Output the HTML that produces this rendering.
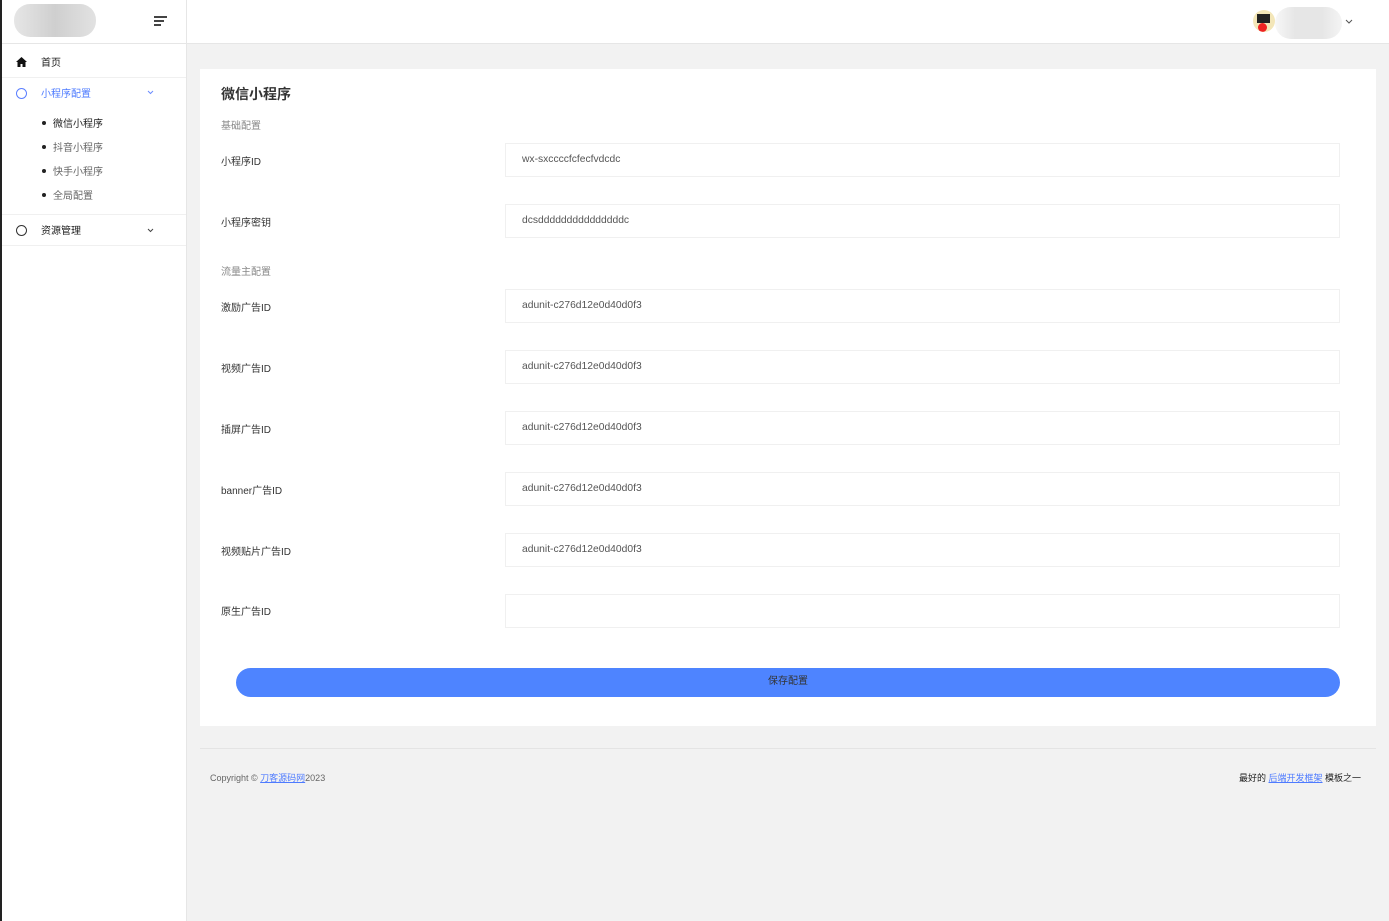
<!DOCTYPE html>
<html><head><meta charset="utf-8"><style>
*{box-sizing:border-box;margin:0;padding:0}
body{width:1389px;height:921px;background:#f2f2f2;font-family:"Liberation Sans","Noto Sans CJK SC",sans-serif;font-size:10px;color:#333;position:relative;overflow:hidden}
.abs{position:absolute}
.side{left:0;top:0;width:187px;height:921px;background:#fff;border-right:1px solid #e6e6e6;border-left:2px solid #222}
.head{left:187px;top:0;width:1202px;height:44px;background:#fff;border-bottom:1px solid #e6e6e6}
.card{left:200px;top:69px;width:1176px;height:657px;background:#fff}
.lbl{left:221px;font-size:10px;color:#333}
.inp{left:505px;width:835px;height:34px;border:1px solid #f0f0f0;background:#fff;padding-left:16px;line-height:32px;font-size:10.3px;color:#555}
.sub{left:221px;color:#888;font-size:10px}
.li{left:53px;font-size:10px;color:#666}
.li:before{content:"";position:absolute;left:-11px;top:6px;width:4px;height:4px;border-radius:50%;background:#222}
</style></head><body>
<div class="abs side"></div>
<div class="abs" style="left:14px;top:4px;width:82px;height:33px;border-radius:16px;background:linear-gradient(90deg,#e6e6e6,#cfcfcf 50%,#e2e2e2)"></div>
<div class="abs" style="left:154px;top:16px;width:13px;height:1.5px;background:#444"></div>
<div class="abs" style="left:154px;top:20px;width:10px;height:1.5px;background:#444"></div>
<div class="abs" style="left:154px;top:24px;width:7px;height:1.5px;background:#444"></div>
<div class="abs" style="left:2px;top:43px;width:184px;height:1px;background:#e6e6e6"></div>
<svg class="abs" style="left:16px;top:57px" width="11" height="10" viewBox="0 0 11 10"><path d="M5.5 0L0 5h1.5v5h3V7h2v3h3V5H11z" fill="#111"/></svg>
<div class="abs" style="left:41px;top:54px;color:#222">首页</div>
<div class="abs" style="left:2px;top:77px;width:184px;height:1px;background:#f0f0f0"></div>
<div class="abs" style="left:16px;top:88px;width:11px;height:11px;border:1.3px solid #5b7fff;border-radius:50%"></div>
<div class="abs" style="left:41px;top:85px;color:#4e7bff">小程序配置</div>
<svg class="abs" style="left:147px;top:90px" width="7" height="5"><path d="M1 1l2.5 2.5L6 1" stroke="#6b8cff" fill="none"/></svg>
<div class="abs li" style="top:115px;color:#222">微信小程序</div>
<div class="abs li" style="top:139px">抖音小程序</div>
<div class="abs li" style="top:163px">快手小程序</div>
<div class="abs li" style="top:187px">全局配置</div>
<div class="abs" style="left:2px;top:214px;width:184px;height:1px;background:#f0f0f0"></div>
<div class="abs" style="left:16px;top:225px;width:11px;height:11px;border:1.3px solid #333;border-radius:50%"></div>
<div class="abs" style="left:41px;top:222px;color:#222">资源管理</div>
<svg class="abs" style="left:147px;top:228px" width="7" height="5"><path d="M1 1l2.5 2.5L6 1" stroke="#444" fill="none"/></svg>
<div class="abs" style="left:2px;top:245px;width:184px;height:1px;background:#f0f0f0"></div>
<div class="abs head"></div>
<div class="abs" style="left:1253px;top:10px;width:22px;height:22px;border-radius:50%;background:#f3e6b8;overflow:hidden"><div style="position:absolute;left:4px;top:4px;width:13px;height:9px;background:#222"></div><div style="position:absolute;left:5px;top:13px;width:9px;height:9px;border-radius:50%;background:#e22"></div></div>
<div class="abs" style="left:1275px;top:7px;width:67px;height:32px;border-radius:16px;background:linear-gradient(90deg,#f7f7f7,#e6e6e6 30%,#e6e6e6 70%,#f4f4f4)"></div>
<svg class="abs" style="left:1345px;top:19px" width="8" height="5"><path d="M1 1l3 3 3-3" stroke="#555" fill="none"/></svg>
<div class="abs card"></div>
<div class="abs" style="left:221px;top:84px;font-size:14px;font-weight:bold;color:#333">微信小程序</div>
<div class="abs sub" style="top:117px">基础配置</div>
<div class="abs lbl" style="top:153px">小程序ID</div><div class="abs inp" style="top:143px">wx-sxccccfcfecfvdcdc</div>
<div class="abs lbl" style="top:214px">小程序密钥</div><div class="abs inp" style="top:204px">dcsdddddddddddddddc</div>
<div class="abs sub" style="top:263px">流量主配置</div>
<div class="abs lbl" style="top:299px">激励广告ID</div><div class="abs inp" style="top:289px">adunit-c276d12e0d40d0f3</div>
<div class="abs lbl" style="top:360px">视频广告ID</div><div class="abs inp" style="top:350px">adunit-c276d12e0d40d0f3</div>
<div class="abs lbl" style="top:421px">插屏广告ID</div><div class="abs inp" style="top:411px">adunit-c276d12e0d40d0f3</div>
<div class="abs lbl" style="top:482px">banner广告ID</div><div class="abs inp" style="top:472px">adunit-c276d12e0d40d0f3</div>
<div class="abs lbl" style="top:543px">视频贴片广告ID</div><div class="abs inp" style="top:533px">adunit-c276d12e0d40d0f3</div>
<div class="abs lbl" style="top:603px">原生广告ID</div><div class="abs inp" style="top:594px"></div>
<div class="abs" style="left:236px;top:668px;width:1104px;height:29px;border-radius:15px;background:#4e84ff;text-align:center;line-height:28px;color:#333">保存配置</div>
<div class="abs" style="left:200px;top:748px;width:1176px;height:1px;background:#e4e4e4"></div>
<div class="abs" style="left:210px;top:771px;color:#666;font-size:9px">Copyright © <span style="color:#4e7bff;text-decoration:underline">刀客源码网</span>2023</div>
<div class="abs" style="left:1239px;top:771px;color:#222;font-size:9px">最好的 <span style="color:#4e7bff;text-decoration:underline">后端开发框架</span> 模板之一</div>
</body></html>
